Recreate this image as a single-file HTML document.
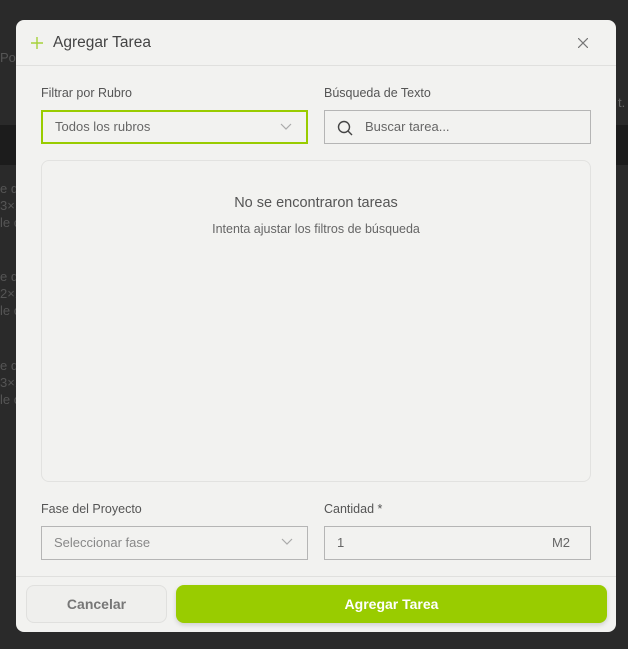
<!DOCTYPE html>
<html><head><meta charset="utf-8"><style>
*{box-sizing:border-box;margin:0;padding:0}
body{width:628px;height:649px;background:#2a2a2a;font-family:"Liberation Sans",sans-serif;position:relative;overflow:hidden}
.bg{position:absolute;color:#555;font-size:13px}
.m{position:absolute;left:16px;top:20px;width:600px;height:612px;background:#f2f2f0;border-radius:8px;overflow:hidden}
.hd{position:absolute;left:0;top:0;width:600px;height:46px;border-bottom:1px solid #e0e0de}
.t{position:absolute;left:37px;top:14px;font-size:15.5px;color:#444}
.lbl{position:absolute;font-size:12.5px;color:#555}
.in{position:absolute;height:34px;border:1px solid #b5b5b5;background:#f2f2f0;font-size:13px;color:#666;padding:0 0 0 12px;line-height:32px}
.chev{position:absolute;right:14px;top:11px}
</style></head><body>
<div class="bg" style="left:0;top:50px">Po</div>
<div style="position:absolute;left:0;top:125px;width:628px;height:40px;background:#1c1c1c"></div>
<div class="bg" style="left:0;top:180px;line-height:17px">e de<br>3×1<br>le c</div>
<div class="bg" style="left:0;top:268px;line-height:17px">e de<br>2×1<br>le c</div>
<div class="bg" style="left:0;top:357px;line-height:17px">e de<br>3×1<br>le c</div>
<div class="bg" style="left:618px;top:95px;color:#666">t.</div>
<div class="m">
<div class="hd">
<svg style="position:absolute;left:15px;top:17px" width="12" height="12"><path d="M6 0V12M0 6H12" stroke="#a6d13a" stroke-width="1.4"/></svg>
<div class="t">Agregar Tarea</div>
<svg style="position:absolute;left:562px;top:18px" width="10" height="10"><path d="M0 0L10 10M10 0L0 10" stroke="#777" stroke-width="1.2"/></svg>
</div>
<div class="lbl" style="left:25px;top:66px">Filtrar por Rubro</div>
<div class="in" style="left:25px;top:90px;width:267px;border:2px solid #99cc00;line-height:30px">Todos los rubros<svg class="chev" width="12" height="8"><path d="M1 1L6 6L11 1" stroke="#aaa" fill="none" stroke-width="1.2"/></svg></div>
<div class="lbl" style="left:308px;top:66px">Búsqueda de Texto</div>
<div class="in" style="left:308px;top:90px;width:267px;padding-left:40px">Buscar tarea...
<svg style="position:absolute;left:12px;top:9px" width="16" height="16"><circle cx="7" cy="7" r="5.5" stroke="#444" fill="none" stroke-width="1.4"/><path d="M11 11L15 15" stroke="#444" stroke-width="1.4"/></svg></div>
<div style="position:absolute;left:25px;top:140px;width:550px;height:322px;border:1px solid #e2e2e0;border-radius:8px">
<div style="position:absolute;top:34px;width:100%;text-align:center;font-size:14.5px;color:#555">No se encontraron tareas</div>
<div style="position:absolute;top:61px;width:100%;text-align:center;font-size:12.5px;color:#666">Intenta ajustar los filtros de búsqueda</div>
</div>
<div class="lbl" style="left:25px;top:482px">Fase del Proyecto</div>
<div class="in" style="left:25px;top:506px;width:267px;color:#888">Seleccionar fase<svg class="chev" width="12" height="8"><path d="M1 1L6 6L11 1" stroke="#aaa" fill="none" stroke-width="1.2"/></svg></div>
<div class="lbl" style="left:308px;top:482px">Cantidad *</div>
<div class="in" style="left:308px;top:506px;width:267px">1<span style="position:absolute;right:20px">M2</span></div>
<div style="position:absolute;left:0;top:556px;width:600px;border-top:1px solid #e0e0de"></div>
<div style="position:absolute;left:10px;top:565px;width:141px;height:38px;border:1px solid #e0e0de;border-radius:8px;background:#efefed;text-align:center;line-height:36px;font-size:14px;color:#777;font-weight:bold">Cancelar</div>
<div style="position:absolute;left:160px;top:565px;width:431px;height:38px;border-radius:8px;background:#99cc00;text-align:center;line-height:38px;font-size:14px;color:#fff;font-weight:bold;box-shadow:0 2px 5px rgba(0,0,0,.15)">Agregar Tarea</div>
</div>
</body></html>
